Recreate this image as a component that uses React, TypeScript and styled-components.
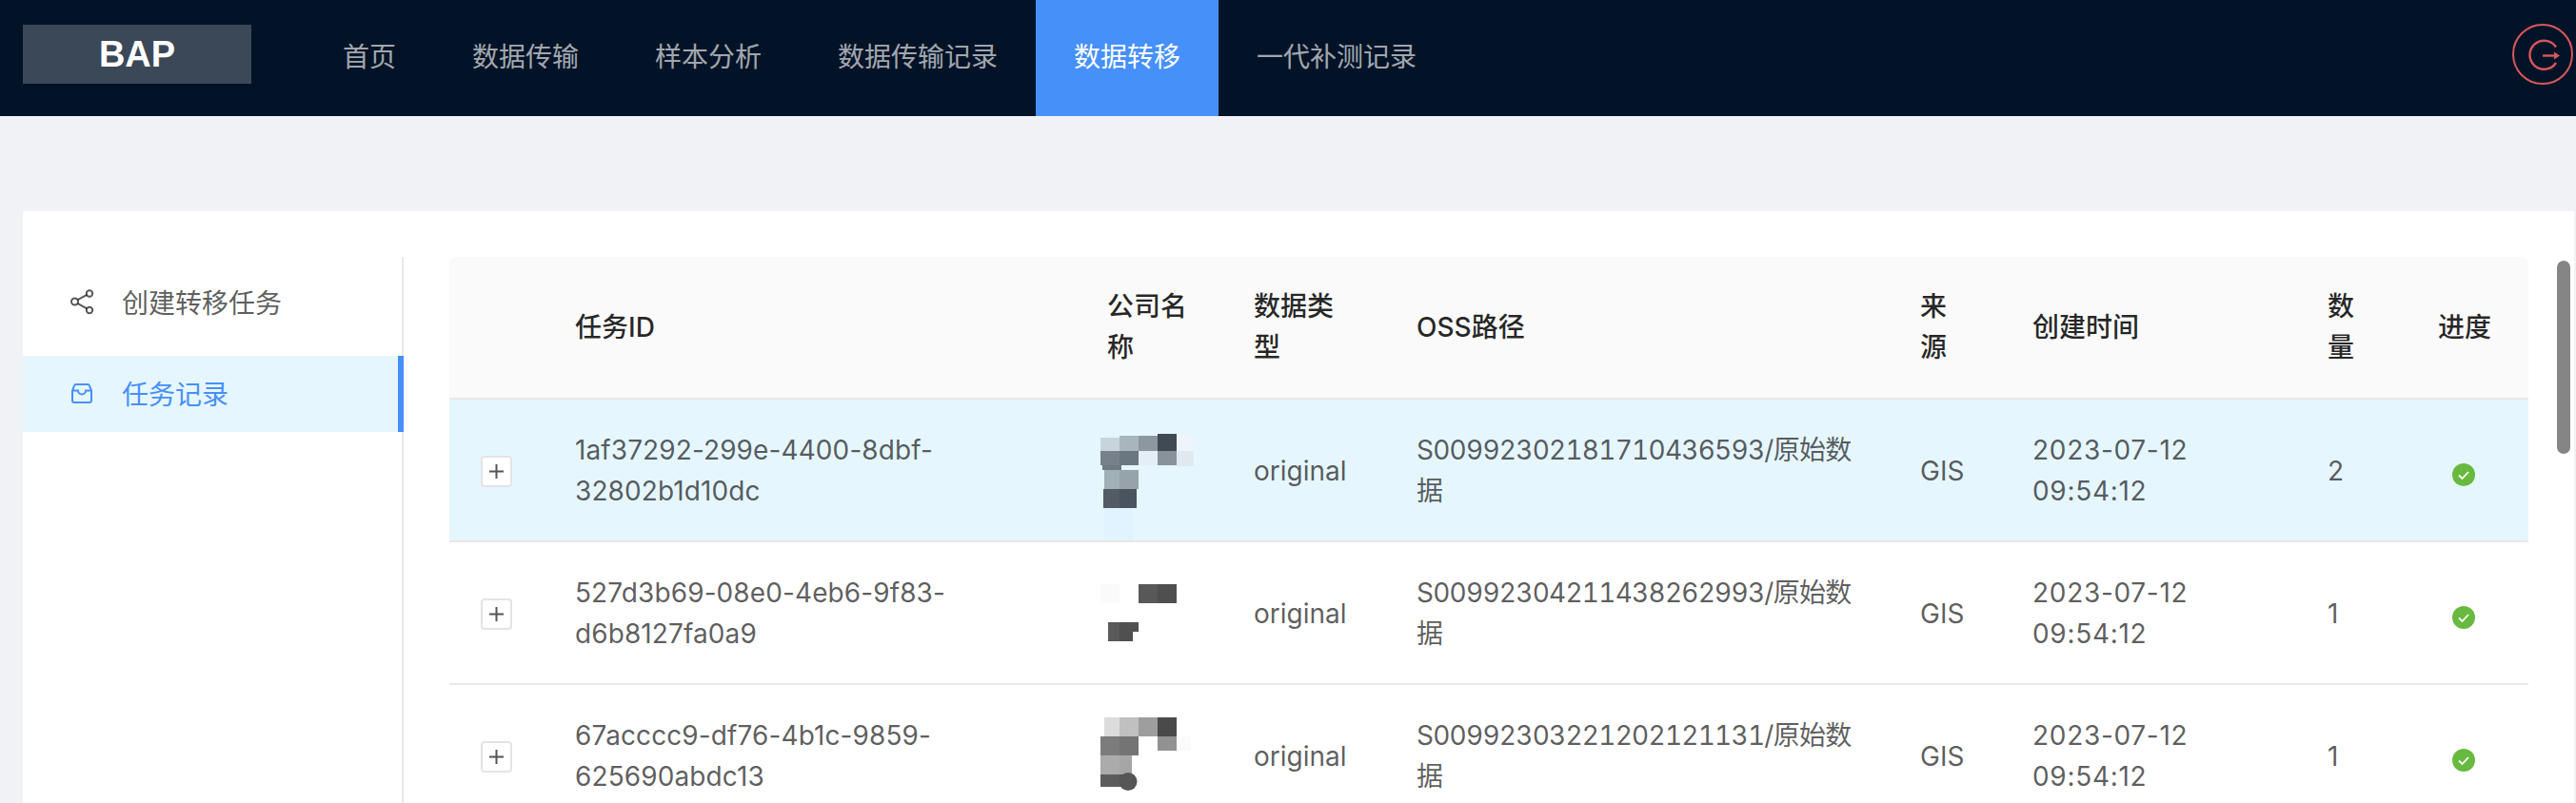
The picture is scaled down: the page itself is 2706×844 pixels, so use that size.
import React from "react";
import styled, { createGlobalStyle } from "styled-components";

const GlobalStyle = createGlobalStyle`
  html, body {
    margin: 0;
    height: 844px;
    overflow: hidden;
    background: #f0f2f5;
    font-family: Inter, "Noto Sans CJK SC", sans-serif;
    font-size: 28px;
  }
`;

const Page = styled.div`
  width: 2706px;
  height: 844px;
  display: flex;
  flex-direction: column;
  overflow: hidden;
`;

const Header = styled.header`
  height: 122px;
  flex: none;
  display: flex;
  align-items: center;
  padding: 0 3px 0 24px;
  background: #031327;
`;

const Logo = styled.div`
  width: 240px;
  height: 62px;
  margin: 0 56px 8px 0;
  display: flex;
  align-items: center;
  justify-content: center;
  background: #3b4858;
  color: #fff;
  font-family: "Liberation Sans", sans-serif;
  font-size: 38px;
  font-weight: 700;
`;

const Nav = styled.nav`
  display: flex;
  height: 100%;
`;

const NavItem = styled.a<{ $active?: boolean }>`
  display: flex;
  align-items: center;
  padding: 0 40px 7px;
  color: ${(p) => (p.$active ? "#fff" : "rgba(255, 255, 255, 0.65)")};
  background: ${(p) => (p.$active ? "#4690fa" : "transparent")};
`;

const Logout = styled.svg`
  width: 64px;
  height: 64px;
  margin: 0 0 8px auto;
  fill: none;
  stroke: #d8585c;
  stroke-width: 2;
`;

const Main = styled.main`
  flex: 1;
  min-height: 0;
  padding: 100px 2px 0 24px;
`;

const Card = styled.section`
  position: relative;
  height: 100%;
  box-sizing: border-box;
  padding-top: 48px;
  display: flex;
  gap: 48px;
  background: #fff;
  overflow: hidden;
`;

const Sidebar = styled.aside`
  width: 400px;
  flex: none;
  box-sizing: border-box;
  padding-top: 8px;
  border-right: 2px solid #e8e8e8;
  display: flex;
  flex-direction: column;
  gap: 16px;
`;

const MenuItem = styled.div<{ $active?: boolean }>`
  height: 80px;
  box-sizing: border-box;
  margin-right: ${(p) => (p.$active ? "-2px" : "0")};
  padding: 0 0 2px 48px;
  display: flex;
  align-items: center;
  gap: 28px;
  color: ${(p) => (p.$active ? "#4690fa" : "rgba(0, 0, 0, 0.65)")};
  background: ${(p) => (p.$active ? "#e6f6ff" : "transparent")};
  border-right: ${(p) => (p.$active ? "6px solid #4690fa" : "none")};

  svg {
    width: 28px;
    height: 28px;
    flex: none;
  }
`;

const Table = styled.table`
  width: 2184px;
  flex: none;
  align-self: flex-start;
  table-layout: fixed;
  border-collapse: separate;
  border-spacing: 0;
  line-height: 43px;
`;

const Col = styled.col<{ $w: number }>`
  width: ${(p) => p.$w}px;
`;

const Th = styled.th`
  padding: 31px 32px;
  text-align: left;
  font-weight: 500;
  color: rgba(0, 0, 0, 0.85);
  background: #fafafa;
  border-bottom: 2px solid #e8e8e8;

  &:first-child {
    border-top-left-radius: 8px;
  }
  &:last-child {
    border-top-right-radius: 8px;
  }
`;

const Row = styled.tr<{ $selected?: boolean }>`
  background: ${(p) => (p.$selected ? "#e6f6ff" : "#fff")};
`;

const Td = styled.td`
  padding: 32px 32px 30px;
  color: rgba(0, 0, 0, 0.65);
  border-bottom: 2px solid #e8e8e8;
  word-break: break-word;
`;

const IdCell = styled(Td)`
  letter-spacing: 0.1px;
`;

const PathCell = styled(Td)`
  font-variant-numeric: tabular-nums;
  letter-spacing: -0.75px;
`;

const TimeCell = styled(Td)`
  letter-spacing: 0.7px;
`;

const ExpandCell = styled(Td)`
  padding: 3px 0 0 33px;
`;

const ExpandButton = styled.button`
  width: 33px;
  height: 33px;
  padding: 0;
  display: flex;
  align-items: center;
  justify-content: center;
  background: #fff;
  border: 2px solid #e4e4e4;
  border-radius: 4px;

  svg {
    width: 17px;
    height: 17px;
    stroke: #555;
    stroke-width: 2;
  }
`;

const MosaicCell = styled(Td)`
  padding: 0 0 0 25px;
  line-height: 0;
  vertical-align: top;
`;

const Mosaic = styled.svg`
  width: 110px;
  height: 148px;
  display: block;
`;

const StatusIcon = styled.svg`
  width: 24px;
  height: 24px;
  display: block;
  margin: 7px 0 0 15px;
`;

const Scrollbar = styled.div`
  position: absolute;
  top: 52px;
  right: 4px;
  width: 14px;
  height: 203px;
  border-radius: 7px;
  background: #858585;
`;

type Block = { x: number; y: number; w: number; h: number; c: string };

const block = (x: number, y: number, w: number, h: number, c: string): Block => ({ x, y, w, h, c });

const mosaicOne: Block[] = [
  block(4, 114, 30, 34, "#e0f3fe"),
  block(0, 40, 20, 14, "#c8d4dc"),
  block(20, 38, 20, 16, "#a9b5bd"),
  block(40, 38, 20, 16, "#8d979f"),
  block(60, 36, 20, 18, "#3f4a55"),
  block(80, 37, 18, 17, "#eef5fa"),
  block(0, 54, 20, 15, "#76818b"),
  block(20, 54, 20, 15, "#6a7680"),
  block(40, 54, 20, 15, "#e4eef6"),
  block(60, 54, 20, 15, "#87929b"),
  block(80, 54, 18, 16, "#e0e9f0"),
  block(2, 69, 20, 5, "#6f7a84"),
  block(4, 74, 16, 20, "#a0aeb5"),
  block(20, 74, 20, 20, "#97a3ab"),
  block(3, 94, 17, 20, "#525b66"),
  block(20, 94, 18, 20, "#4a545f"),
];

const mosaicTwo: Block[] = [
  block(0, 44, 20, 20, "#fafafa"),
  block(40, 44, 20, 20, "#585858"),
  block(60, 44, 20, 20, "#4f4f4f"),
  block(8, 84, 12, 20, "#5a5a5a"),
  block(20, 84, 14, 20, "#505050"),
  block(34, 84, 6, 10, "#505050"),
];

const mosaicThree: Block[] = [
  block(4, 34, 16, 20, "#dcdcdc"),
  block(20, 34, 20, 20, "#c0c0c0"),
  block(40, 34, 20, 20, "#9e9e9e"),
  block(60, 34, 20, 20, "#4a4a4a"),
  block(0, 54, 20, 20, "#7c7c7c"),
  block(20, 54, 20, 20, "#747474"),
  block(60, 54, 20, 15, "#929292"),
  block(80, 54, 15, 15, "#fbfbfb"),
  block(0, 74, 20, 20, "#ababab"),
  block(20, 74, 13, 20, "#a6a6a6"),
  block(0, 94, 20, 13, "#5c5c5c"),
  block(20, 94, 12, 13, "#565656"),
];

const rows = [
  { id: "1af37292-299e-4400-8dbf-32802b1d10dc", oss: "S00992302181710436593", count: 2, mosaic: mosaicOne },
  { id: "527d3b69-08e0-4eb6-9f83-d6b8127fa0a9", oss: "S00992304211438262993", count: 1, mosaic: mosaicTwo },
  { id: "67acccc9-df76-4b1c-9859-625690abdc13", oss: "S00992303221202121131", count: 1, mosaic: mosaicThree },
];

const navItems = ["首页", "数据传输", "样本分析", "数据传输记录", "数据转移", "一代补测记录"];
const columns = ["", "任务ID", "公司名称", "数据类型", "OSS路径", "来源", "创建时间", "数量", "进度"];
const colWidths = [100, 559, 154, 171, 529, 118, 310, 116, 127];

function ShareIcon() {
  return (
    <svg viewBox="0 0 28 28" fill="none" stroke="currentColor" strokeWidth="2">
      <circle cx="6.500" cy="14" r="3.500" />
      <circle cx="22" cy="5.500" r="3.200" />
      <circle cx="22" cy="23" r="3.200" />
      <path d="M9.500 12.200l9.800-5.300M9.500 15.800l9.800 5.500" />
    </svg>
  );
}

function InboxIcon() {
  return (
    <svg viewBox="0 0 28 28" fill="none" stroke="currentColor" strokeWidth="2">
      <path d="M8 5h12a2 2 0 0 1 2 1.500l2 5V22a2 2 0 0 1-2 2H6a2 2 0 0 1-2-2V11.500l2-5A2 2 0 0 1 8 5z" />
      <path d="M4 11.500h6a4 4 0 0 0 8 0h6" />
    </svg>
  );
}

function App() {
  return (
    <Page>
      <GlobalStyle />
      <Header>
        <Logo>BAP</Logo>
        <Nav>
          {navItems.map((item) => (
            <NavItem key={item} $active={item === "数据转移"}>
              {item}
            </NavItem>
          ))}
        </Nav>
        <Logout viewBox="0 0 64 64">
          <circle cx="32" cy="32" r="31" />
          <path d="M46 24.500A15 15 0 1 0 46 41" strokeWidth="2.400" />
          <path d="M32 33.500h13" strokeWidth="2.400" />
          <path d="M44 29.500l6 4-6 4z" fill="#d8585c" stroke="none" />
        </Logout>
      </Header>
      <Main>
        <Card>
          <Sidebar>
            <MenuItem>
              <ShareIcon />
              创建转移任务
            </MenuItem>
            <MenuItem $active>
              <InboxIcon />
              任务记录
            </MenuItem>
          </Sidebar>
          <Table>
            <colgroup>
              {colWidths.map((w, i) => (
                <Col key={i} $w={w} />
              ))}
            </colgroup>
            <thead>
              <tr>
                {columns.map((c, i) => (
                  <Th key={i}>{c}</Th>
                ))}
              </tr>
            </thead>
            <tbody>
              {rows.map((r, i) => (
                <Row key={r.id} $selected={i === 0}>
                  <ExpandCell>
                    <ExpandButton>
                      <svg viewBox="0 0 17 17">
                        <path d="M8.500 1v15M1 8.500h15" />
                      </svg>
                    </ExpandButton>
                  </ExpandCell>
                  <IdCell>{r.id}</IdCell>
                  <MosaicCell>
                    <Mosaic viewBox="0 0 110 148" shapeRendering="crispEdges">
                      {r.mosaic.map((b, j) => (
                        <rect key={j} x={b.x} y={b.y} width={b.w} height={b.h} fill={b.c} />
                      ))}
                      {i === 2 && <circle cx="29" cy="101.500" r="9.500" fill="#565656" shapeRendering="auto" />}
                    </Mosaic>
                  </MosaicCell>
                  <Td>original</Td>
                  <PathCell>{r.oss}/原始数据</PathCell>
                  <Td>GIS</Td>
                  <TimeCell>2023-07-12 09:54:12</TimeCell>
                  <Td>{r.count}</Td>
                  <Td>
                    <StatusIcon viewBox="0 0 24 24">
                      <circle cx="12" cy="12" r="12" fill="#67ba3f" />
                      <path d="M7 12.500l3.500 3.500L17 9" fill="none" stroke="#fff" strokeWidth="1.800" />
                    </StatusIcon>
                  </Td>
                </Row>
              ))}
            </tbody>
          </Table>
          <Scrollbar />
        </Card>
      </Main>
    </Page>
  );
}

export default App;
